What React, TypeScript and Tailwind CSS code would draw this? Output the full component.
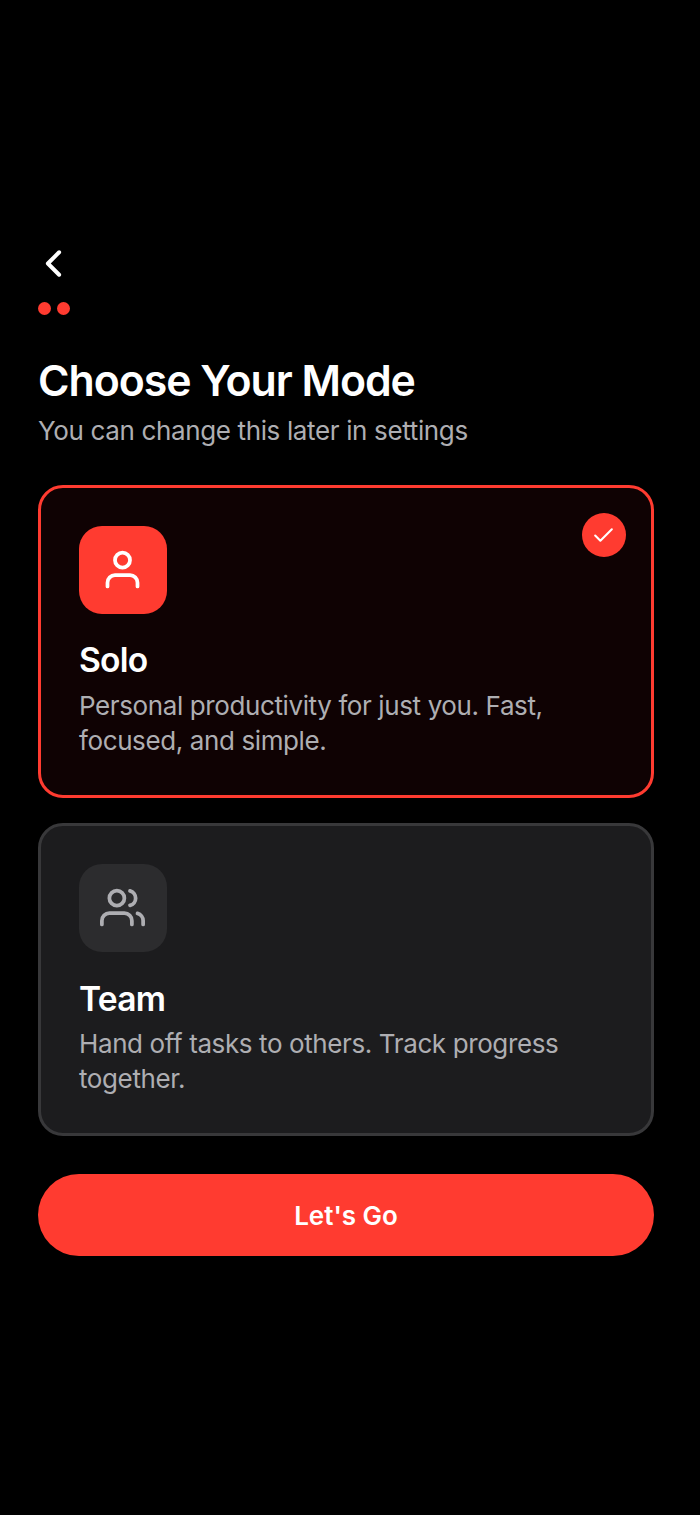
import { useState } from 'react';
import type { IconType } from 'react-icons';
import { FiCheck, FiChevronLeft, FiUser, FiUsers } from 'react-icons/fi';

type Mode = 'solo' | 'team';

interface ModeOption {
  id: Mode;
  title: string;
  description: string;
  icon: IconType;
}

const MODES: ModeOption[] = [
  {
    id: 'solo',
    title: 'Solo',
    description: 'Personal productivity for just you. Fast, focused, and simple.',
    icon: FiUser,
  },
  {
    id: 'team',
    title: 'Team',
    description: 'Hand off tasks to others. Track progress together.',
    icon: FiUsers,
  },
];

function ModeCard({ mode, selected, onSelect }: { mode: ModeOption; selected: boolean; onSelect: () => void }) {
  const Icon = mode.icon;

  return (
    <button
      onClick={onSelect}
      className={`relative flex h-[313px] w-full flex-col items-start justify-start rounded-[25px] border-3 px-[38px] pt-[38px] text-left ${
        selected ? 'border-[#ff3b30] bg-[#0f0203]' : 'border-[#38383a] bg-[#1c1c1e]'
      }`}
    >
      <div
        className={`flex size-[88px] items-center justify-center rounded-[23px] pr-px pb-px ${
          selected ? 'bg-[#ff3b30] text-white' : 'bg-[#2c2c2e] text-[#aeaeb2]'
        }`}
      >
        <Icon size={45} strokeWidth={2} />
      </div>
      <h2 className="mt-[25.2px] text-[33.6px] leading-[42px] font-semibold tracking-[-0.75px] text-white">{mode.title}</h2>
      <p className="mt-[7.8px] text-[26px] leading-[34.6px] tracking-[-0.39px] text-[#aeaeb2]">{mode.description}</p>

      {selected && (
        <span className="absolute top-[25px] right-[25px] flex size-[44px] items-center justify-center rounded-full bg-[#ff3b30] pr-px text-white">
          <FiCheck size={25} />
        </span>
      )}
    </button>
  );
}

export default function App() {
  const [selected, setSelected] = useState<Mode>('solo');

  return (
    <div className="min-h-[1515px] bg-black pt-[241px] pr-[46px] pl-[38px] font-['Inter',sans-serif] text-white">
      <button aria-label="Back" className="-ml-[7px] block">
        <FiChevronLeft size={45} strokeWidth={2.1} />
      </button>

      <div className="mt-[16px] flex gap-[6px]">
        <span className="size-[13px] rounded-full bg-[#ff3b30]" />
        <span className="size-[13px] rounded-full bg-[#ff3b30]" />
      </div>

      <h1 className="mt-[39px] text-[42.8px] leading-[54px] font-semibold tracking-[-1.03px]">Choose Your Mode</h1>
      <p className="mt-[5px] text-[26px] leading-[36px] tracking-[-0.36px] text-[#aeaeb2]">You can change this later in settings</p>

      <div className="mt-[36px] space-y-[25.4px]">
        {MODES.map(mode => (
          <ModeCard
            key={mode.id}
            mode={mode}
            selected={selected === mode.id}
            onSelect={() => setSelected(mode.id)}
          />
        ))}
      </div>

      <button className="mt-[37.6px] h-[82px] w-full rounded-full bg-[#ff3b30] pt-px text-[26px] font-semibold">
        Let's Go
      </button>
    </div>
  );
}
